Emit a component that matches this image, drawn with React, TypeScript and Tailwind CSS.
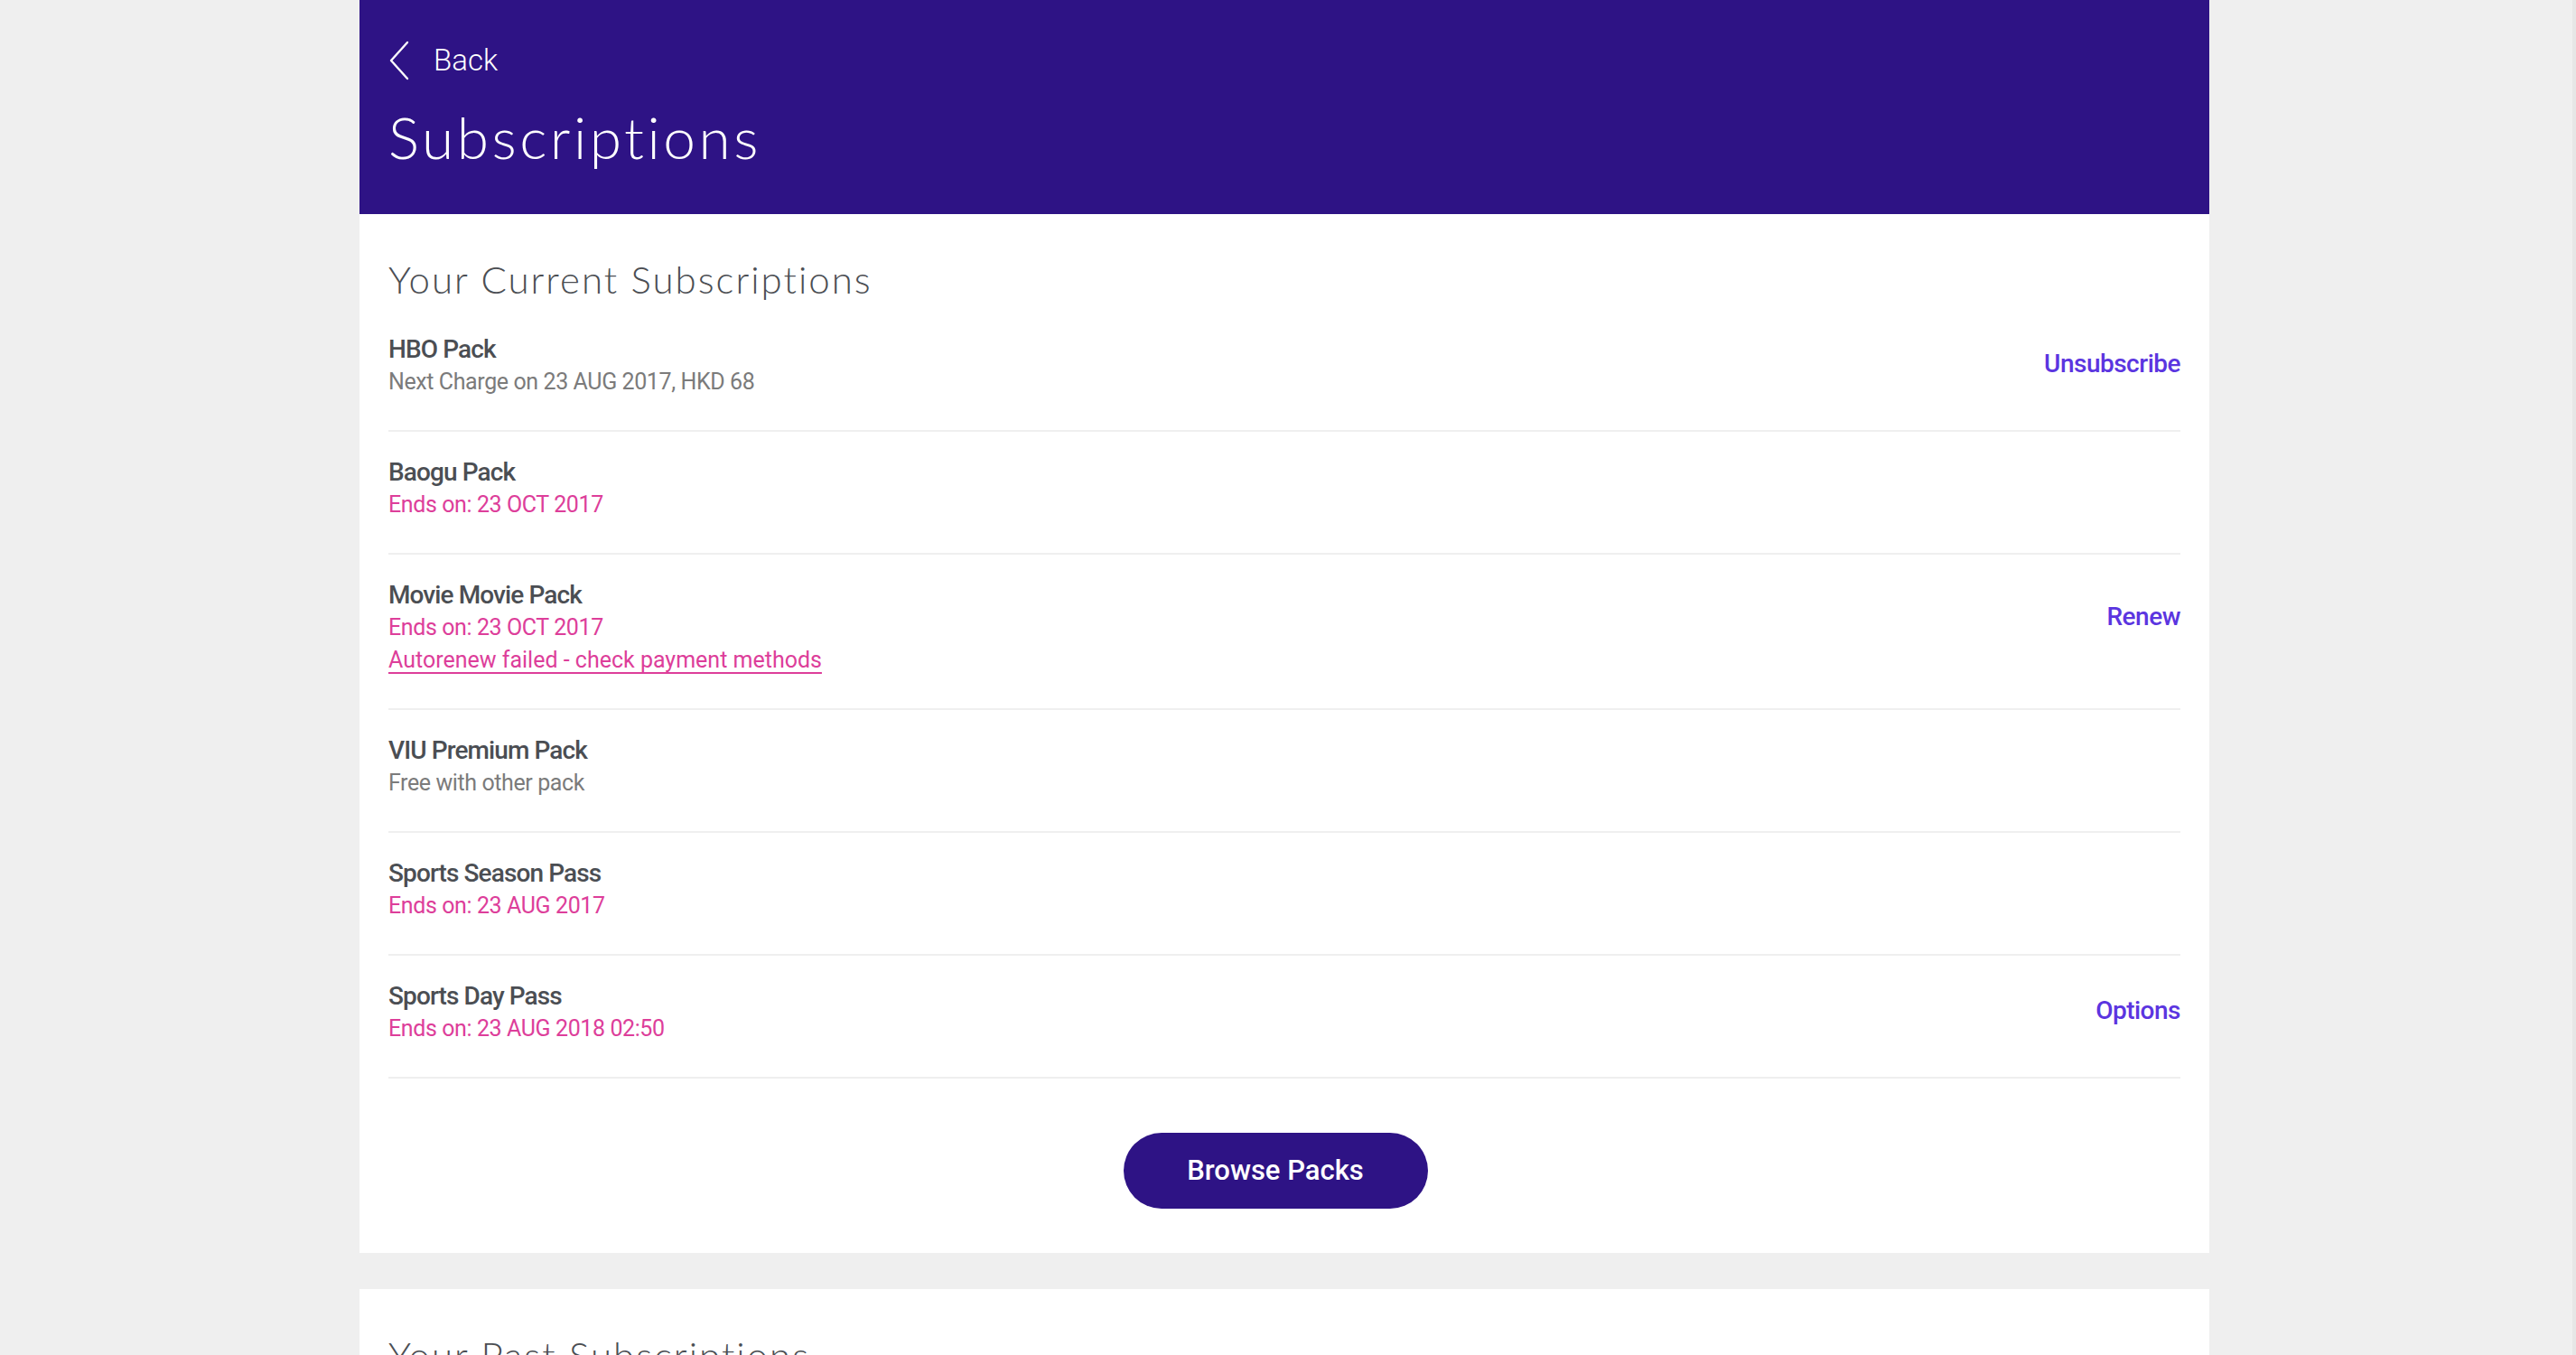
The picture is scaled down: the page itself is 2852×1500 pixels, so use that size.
import React from "react";

type Sub = {
	name: string;
	lines: { text: string; tone: "gray" | "pink" | "link" }[];
	action?: string;
	lift?: boolean;
};

const subs: Sub[] = [
	{ name: "HBO Pack", lines: [{ text: "Next Charge on 23 AUG 2017, HKD 68", tone: "gray" }], action: "Unsubscribe" },
	{ name: "Baogu Pack", lines: [{ text: "Ends on: 23 OCT 2017", tone: "pink" }] },
	{
		name: "Movie Movie Pack",
		lines: [
			{ text: "Ends on: 23 OCT 2017", tone: "pink" },
			{ text: "Autorenew failed - check payment methods", tone: "link" },
		],
		action: "Renew",
		lift: true,
	},
	{ name: "VIU Premium Pack", lines: [{ text: "Free with other pack", tone: "gray" }] },
	{ name: "Sports Season Pass", lines: [{ text: "Ends on: 23 AUG 2017", tone: "pink" }] },
	{ name: "Sports Day Pass", lines: [{ text: "Ends on: 23 AUG 2018 02:50", tone: "pink" }], action: "Options" },
];

const toneClass = {
	gray: "text-[#7b7b7b] tracking-[-0.4px]",
	pink: "text-[#dd3e9a] tracking-[-0.4px]",
	link: "text-[#dd3e9a] tracking-[0px] underline underline-offset-[5px] decoration-2",
};

const Row = ({ sub }: { sub: Sub }) => (
	<div className="flex items-center justify-between border-b-2 border-[#efefef] pt-[27px] pb-[35px]">
		<div className="flex flex-col">
			<p className="text-[28px] leading-[36px] font-medium tracking-[-0.9px] text-[#4b4e53]">{sub.name}</p>
			{sub.lines.map(l => (
				<p key={l.text} className={`text-[25px] leading-[36px] ${toneClass[l.tone]}`}>
					{l.text}
				</p>
			))}
		</div>
		{sub.action && (
			<p className={`text-[28px] font-medium tracking-[-0.5px] text-[#5b35e0] ${sub.lift ? "mb-[24px]" : "mb-[5px]"}`}>
				{sub.action}
			</p>
		)}
	</div>
);

const App = () => {
	return (
		<div className="min-h-screen bg-[#efefef] border-r-4 border-[#e6e6e6] pr-[4px] font-['Roboto',sans-serif]">
			<div className="mx-auto w-[2048px] flex flex-col">
				<header className="bg-[#2e1385] h-[237px] px-8 pt-[45px] text-white">
					<div className="flex items-center gap-[26px] h-[44px]">
						<svg width="24" height="44" viewBox="0 0 24 44" fill="none">
							<polyline points="21,2 3,22 21,42" stroke="white" strokeWidth="2.4" strokeLinecap="round" strokeLinejoin="round" />
						</svg>
						<span className="text-[33px] font-light leading-[44px]">Back</span>
					</div>
					<h1 className="mt-[27px] text-[64px] leading-[72px] font-light font-['Lato',sans-serif] tracking-[3.5px]">
						Subscriptions
					</h1>
				</header>

				<section className="bg-white px-8 pt-[48px] pb-[49px]">
					<h2 className="text-[42px] leading-[48px] font-light text-[#4b4e53] font-['Lato',sans-serif] tracking-[2px] mb-[9px]">
						Your Current Subscriptions
					</h2>
					<div className="flex flex-col">
						{subs.map(s => (
							<Row key={s.name} sub={s} />
						))}
					</div>
					<div className="flex justify-center mt-[60px]">
						<button className="mr-[20px] w-[337px] h-[84px] rounded-full bg-[#2e1385] text-white text-[31px] font-medium">
							Browse Packs
						</button>
					</div>
				</section>

				<section className="bg-white px-8 pt-[49px] pb-[49px] mt-[40px]">
					<h2 className="text-[42px] leading-[48px] font-light text-[#4b4e53] font-['Lato',sans-serif] tracking-[2px]">
						Your Past Subscriptions
					</h2>
				</section>
			</div>
		</div>
	);
};

export default App;
